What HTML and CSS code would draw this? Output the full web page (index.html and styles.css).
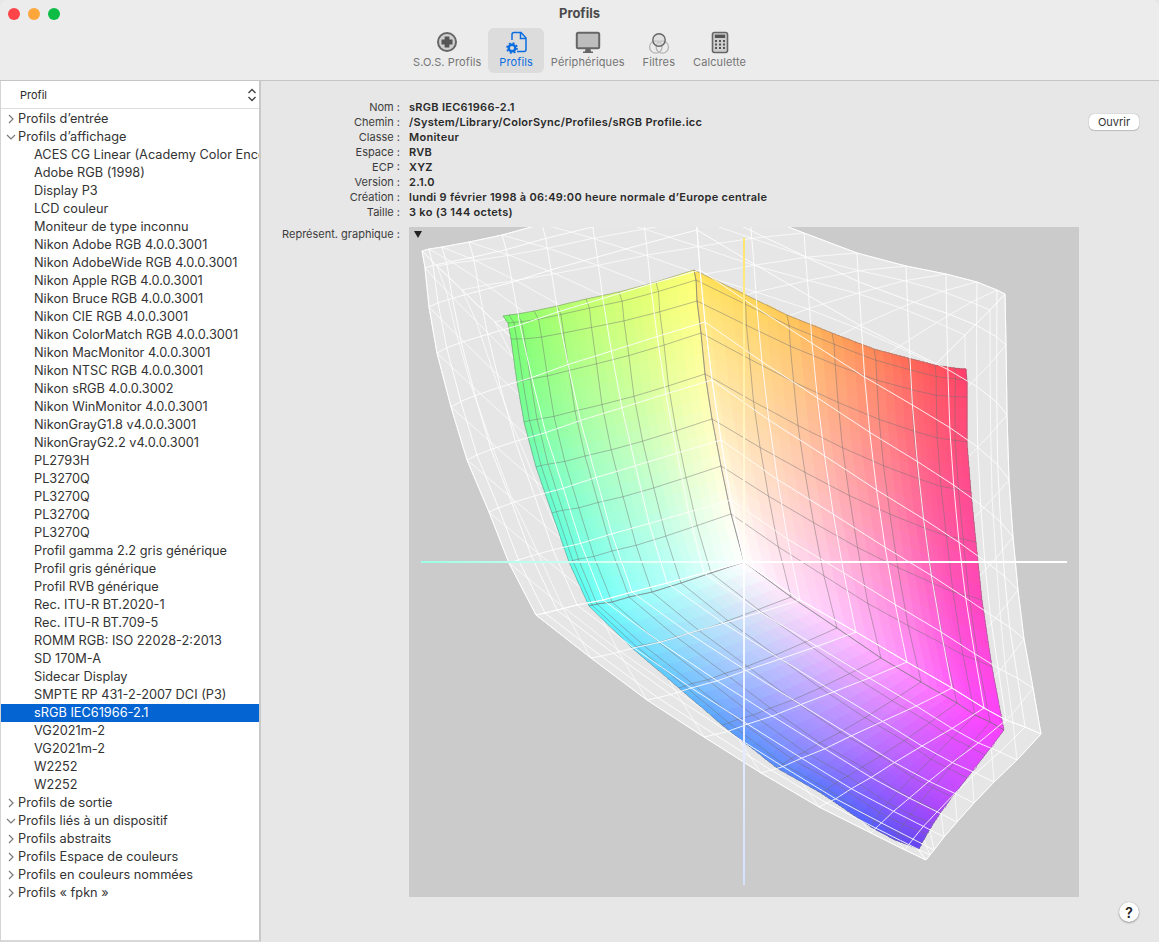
FILE: index.html
```html
<!DOCTYPE html>
<html lang="fr">
<head>
<meta charset="utf-8">
<title>Profils</title>
<link rel="stylesheet" href="styles.css">
</head>
<body>
<div class="window">
  <header class="toolbar">
    <div class="traffic">
      <span class="light light-red"></span>
      <span class="light light-orange"></span>
      <span class="light light-green"></span>
    </div>
    <div class="title">Profils</div>
    <nav class="tabs">
      <div class="tab">
        <svg class="tab-icon" viewBox="0 0 24 24"><circle cx="12" cy="11" r="9" fill="#cfcfcf" stroke="#666" stroke-width="2"/><path d="M9.6 5.5h4.8v3.1h3.1v4.8h-3.1v3.1H9.6v-3.1H6.500v-4.800h3.100z" fill="#555"/></svg>
        <span>S.O.S. Profils</span>
      </div>
      <div class="tab tab-active">
        <svg class="tab-icon" viewBox="0 0 24 24"><path d="M8 9V3.500a2 2 0 0 1 2-2h7l5 5.500v11.500a2 2 0 0 1-2 2h-7" fill="none" stroke="#0a6ce0" stroke-width="1.500"/><path d="M16.500 1.500V7.500H22" fill="none" stroke="#0a6ce0" stroke-width="1.500"/><circle cx="8" cy="17" r="3.300" fill="none" stroke="#0a6ce0" stroke-width="2.400"/><circle cx="8" cy="17" r="5" fill="none" stroke="#0a6ce0" stroke-width="1.600" stroke-dasharray="2 1.930"/></svg>
        <span>Profils</span>
      </div>
      <div class="tab">
        <svg class="tab-icon tab-icon-wide" viewBox="0 0 26 24"><rect x="1.800" y="1.800" width="22.400" height="15.400" rx="1.500" fill="#bdbdbd" stroke="#666" stroke-width="2"/><path d="M10.500 18h5l.5 2.500h2v1.500H8v-1.500h2z" fill="#666"/></svg>
        <span>Périphériques</span>
      </div>
      <div class="tab">
        <svg class="tab-icon" viewBox="0 0 24 24"><circle cx="8.800" cy="16" r="6.200" fill="none" stroke="#b4b4b4" stroke-width="1.300"/><circle cx="15.300" cy="16" r="6.200" fill="none" stroke="#b4b4b4" stroke-width="1.300"/><circle cx="12" cy="9" r="6.200" fill="#d4d4d4" fill-opacity=".5" stroke="#666" stroke-width="1.400"/></svg>
        <span>Filtres</span>
      </div>
      <div class="tab">
        <svg class="tab-icon" viewBox="0 0 24 24"><rect x="4.500" y="1.500" width="15" height="20" rx="2" fill="#cfcfcf" stroke="#666" stroke-width="1.600"/><rect x="6.800" y="3.600" width="10.400" height="3.400" fill="#555"/><g fill="#555"><rect x="7" y="9" width="2" height="2"/><rect x="11" y="9" width="2" height="2"/><rect x="15" y="9" width="2" height="2"/><rect x="7" y="12.500" width="2" height="2"/><rect x="11" y="12.500" width="2" height="2"/><rect x="15" y="12.500" width="2" height="2"/><rect x="7" y="16" width="2" height="2"/><rect x="11" y="16" width="2" height="2"/><rect x="15" y="16" width="2" height="2"/></g></svg>
        <span>Calculette</span>
      </div>
    </nav>
  </header>
  <div class="body">
    <aside class="sidebar">
      <div class="side-head">
        <span>Profil</span>
        <svg class="sort" viewBox="0 0 10 14"><path d="M1.500 5 5 1.500 8.500 5M1.500 9 5 12.500 8.500 9" fill="none" stroke="#444" stroke-width="1.400"/></svg>
      </div>
      <ul class="tree">
        <li class="group"><svg class="chev" viewBox="0 0 10 10"><path d="M3 1l4 4-4 4" /></svg>Profils d’entrée</li>
        <li class="group"><svg class="chev" viewBox="0 0 10 10"><path d="M1 3l4 4 4-4" /></svg>Profils d’affichage</li>
        <li class="item">ACES CG Linear (Academy Color Enco</li>
        <li class="item">Adobe RGB (1998)</li>
        <li class="item">Display P3</li>
        <li class="item">LCD couleur</li>
        <li class="item">Moniteur de type inconnu</li>
        <li class="item">Nikon Adobe RGB 4.0.0.3001</li>
        <li class="item">Nikon AdobeWide RGB 4.0.0.3001</li>
        <li class="item">Nikon Apple RGB 4.0.0.3001</li>
        <li class="item">Nikon Bruce RGB 4.0.0.3001</li>
        <li class="item">Nikon CIE RGB 4.0.0.3001</li>
        <li class="item">Nikon ColorMatch RGB 4.0.0.3001</li>
        <li class="item">Nikon MacMonitor 4.0.0.3001</li>
        <li class="item">Nikon NTSC RGB 4.0.0.3001</li>
        <li class="item">Nikon sRGB 4.0.0.3002</li>
        <li class="item">Nikon WinMonitor 4.0.0.3001</li>
        <li class="item">NikonGrayG1.8 v4.0.0.3001</li>
        <li class="item">NikonGrayG2.2 v4.0.0.3001</li>
        <li class="item">PL2793H</li>
        <li class="item">PL3270Q</li>
        <li class="item">PL3270Q</li>
        <li class="item">PL3270Q</li>
        <li class="item">PL3270Q</li>
        <li class="item">Profil gamma 2.2 gris générique</li>
        <li class="item">Profil gris générique</li>
        <li class="item">Profil RVB générique</li>
        <li class="item">Rec. ITU-R BT.2020-1</li>
        <li class="item">Rec. ITU-R BT.709-5</li>
        <li class="item">ROMM RGB: ISO 22028-2:2013</li>
        <li class="item">SD 170M-A</li>
        <li class="item">Sidecar Display</li>
        <li class="item">SMPTE RP 431-2-2007 DCI (P3)</li>
        <li class="item item-selected">sRGB IEC61966-2.1</li>
        <li class="item">VG2021m-2</li>
        <li class="item">VG2021m-2</li>
        <li class="item">W2252</li>
        <li class="item">W2252</li>
        <li class="group"><svg class="chev" viewBox="0 0 10 10"><path d="M3 1l4 4-4 4" /></svg>Profils de sortie</li>
        <li class="group"><svg class="chev" viewBox="0 0 10 10"><path d="M1 3l4 4 4-4" /></svg>Profils liés à un dispositif</li>
        <li class="group"><svg class="chev" viewBox="0 0 10 10"><path d="M3 1l4 4-4 4" /></svg>Profils abstraits</li>
        <li class="group"><svg class="chev" viewBox="0 0 10 10"><path d="M3 1l4 4-4 4" /></svg>Profils Espace de couleurs</li>
        <li class="group"><svg class="chev" viewBox="0 0 10 10"><path d="M3 1l4 4-4 4" /></svg>Profils en couleurs nommées</li>
        <li class="group"><svg class="chev" viewBox="0 0 10 10"><path d="M3 1l4 4-4 4" /></svg>Profils « fpkn »</li>
      </ul>
    </aside>
    <main class="main">
      <div class="top">
        <dl class="info">
          <dt>Nom :</dt><dd>sRGB IEC61966-2.1</dd>
          <dt>Chemin :</dt><dd>/System/Library/ColorSync/Profiles/sRGB Profile.icc</dd>
          <dt>Classe :</dt><dd>Moniteur</dd>
          <dt>Espace :</dt><dd>RVB</dd>
          <dt>ECP :</dt><dd>XYZ</dd>
          <dt>Version :</dt><dd>2.1.0</dd>
          <dt>Création :</dt><dd>lundi 9 février 1998 à 06:49:00 heure normale d’Europe centrale</dd>
          <dt>Taille :</dt><dd>3 ko (3 144 octets)</dd>
        </dl>
        <button class="open">Ouvrir</button>
      </div>
      <div class="plot-row">
        <div class="plot-label">Représent. graphique :</div>
        <div class="plot">
          <svg id="gamut" class="gamut" viewBox="409 227 670 670"></svg>
          <span class="plot-menu"></span>
        </div>
      </div>
      <div class="foot"><button class="help">?</button></div>
    </main>
  </div>
</div>
<script src="gamut.js"></script>
</body>
</html>
```
FILE: styles.css
```css
* { box-sizing: border-box; }
html, body { margin: 0; height: 100%; }
body {
  background: #e7e7e7;
  font-family: Inter, "Liberation Sans", sans-serif;
  color: #2a2a2a;
  overflow: hidden;
}
.window { width: 1159px; height: 942px; display: flex; flex-direction: column; }

.toolbar {
  position: relative;
  height: 81px;
  background: #ececec;
  border-bottom: 1px solid #c6c6c6;
  border-radius: 8px 8px 0 0;
  display: flex;
  flex-direction: column;
  align-items: center;
  flex: none;
}
.traffic { position: absolute; left: 8px; top: 8px; display: flex; gap: 8px; }
.light { width: 12px; height: 12px; border-radius: 50%; }
.light-red { background: #fc4549; }
.light-orange { background: #fda63c; }
.light-green { background: #0cbc45; }
.title { font-size: 13px; font-weight: 700; color: #4b4b4b; line-height: 16px; margin-top: 5px; }
.tabs { display: flex; margin-top: 7px; }
.tab {
  height: 45px;
  padding: 0 9px;
  display: flex;
  flex-direction: column;
  align-items: center;
  font-size: 11px;
  letter-spacing: .1px;
  color: #757575;
  white-space: nowrap;
  border-radius: 6px;
}
.tab span { line-height: 13px; margin-top: 1px; }
.tab-active { background: #dcdcdc; color: #0a6ce0; padding: 0 11px; margin: 0 -2px; }
.tab-icon { width: 24px; height: 24px; margin-top: 3px; flex: none; }
.tab-icon-wide { width: 26px; }

.body { flex: 1; display: flex; min-height: 0; }
.sidebar {
  width: 261px;
  flex: none;
  background: #fff;
  border-left: 1px solid #d4d4d4;
  border-right: 2px solid #c9c9c9;
  border-bottom: 2px solid #d8d8d8;
  overflow: hidden;
}
.side-head {
  height: 28px;
  display: flex;
  align-items: center;
  justify-content: space-between;
  padding: 0 2px 0 19px;
  font-size: 11px;
  border-bottom: 1px solid #dedede;
}
.sort { width: 10px; height: 14px; }
.tree { list-style: none; margin: 0; padding: 1px 0 0; font-size: 12.750px; }
.tree li { height: 18px; line-height: 18px; white-space: nowrap; overflow: hidden; color: #333; }
.group { padding-left: 17px; position: relative; }
.item { padding-left: 33px; }
.tree .item-selected { background: #0464d2; color: #fff; }
.chev { position: absolute; left: 5px; top: 4px; width: 10px; height: 10px; fill: none; stroke: #7a7a7a; stroke-width: 1.200; }

.main { flex: 1; min-width: 0; display: flex; flex-direction: column; }
.top { display: flex; justify-content: space-between; align-items: flex-start; padding: 19px 20px 0 0; }
.info {
  margin: 0;
  display: grid;
  grid-template-columns: 139px auto;
  column-gap: 9px;
  font-size: 11px;
  line-height: 15px;
}
.info dt { text-align: right; color: #3c3c3c; white-space: nowrap; }
.info dd { margin: 0; font-weight: 600; letter-spacing: .28px; color: #2a2a2a; white-space: nowrap; }
.open {
  margin-top: 14px;
  width: 50px;
  height: 16px;
  padding: 0;
  border: 0;
  border-radius: 5px;
  background: #fff;
  box-shadow: 0 0 1px rgba(0,0,0,.45), 0 1px 1px rgba(0,0,0,.15);
  font: 11px/16px Inter, "Liberation Sans", sans-serif;
  color: #333;
}
.plot-row { display: flex; margin-top: 7px; gap: 9px; align-items: flex-start; }
.plot-label { width: 139px; text-align: right; font-size: 11px; line-height: 15px; color: #3c3c3c; white-space: nowrap; }
.plot { position: relative; width: 670px; height: 670px; background: #cbcbcb; overflow: hidden; }
.gamut { display: block; width: 670px; height: 670px; }
.plot-menu {
  position: absolute;
  left: 5px;
  top: 4px;
  width: 0;
  height: 0;
  border-left: 4.500px solid transparent;
  border-right: 4.500px solid transparent;
  border-top: 7px solid #222;
}
.foot { display: flex; justify-content: flex-end; padding: 5px 20px 0 0; }
.help {
  width: 20px;
  height: 20px;
  padding: 0;
  border: 0;
  border-radius: 50%;
  background: #fff;
  box-shadow: 0 0 1px rgba(0,0,0,.35), 0 1px 2px rgba(0,0,0,.3);
  font: 600 14px Inter, "Liberation Sans", sans-serif;
  color: #222;
}
```
FILE: gamut.js
```js
(function () {
  var NS = 'http://www.w3.org/2000/svg';
  var svg = document.getElementById('gamut');
  var SUB = 4;

  function rev(a) { return a.slice().reverse(); }
  function at(edge, t) {
    var i = Math.min(Math.floor(t), edge.length - 2), f = t - i;
    return edge[i].map(function (c, k) { return c + (edge[i + 1][k] - c) * f; });
  }
  function coons(p, u, v) {
    var a = u / 8, b = v / 8, T = at(p.top, u), B = at(p.bottom, u), L = at(p.left, v), R = at(p.right, v);
    var c00 = p.top[0], c10 = p.top[8], c01 = p.bottom[0], c11 = p.bottom[8];
    return T.map(function (_, k) {
      return (1 - b) * T[k] + b * B[k] + (1 - a) * L[k] + a * R[k]
        - ((1 - a) * (1 - b) * c00[k] + a * (1 - b) * c10[k] + (1 - a) * b * c01[k] + a * b * c11[k]);
    });
  }
  function add(tag, attrs, parent) {
    var n = document.createElementNS(NS, tag);
    for (var k in attrs) n.setAttribute(k, attrs[k]);
    (parent || svg).appendChild(n);
    return n;
  }
  function pts(list) { return list.map(function (p) { return p[0].toFixed(1) + ',' + p[1].toFixed(1); }).join(' '); }
  function lines(p, g) {
    var i, j, line;
    for (i = 0; i <= 8; i++) {
      line = [];
      for (j = 0; j <= 32; j++) line.push(coons(p, i, j / 4));
      add('polyline', { points: pts(line) }, g);
      line = [];
      for (j = 0; j <= 32; j++) line.push(coons(p, j / 4, i));
      add('polyline', { points: pts(line) }, g);
    }
  }

  /* outer gamut (wireframe) */
  var oYG = [[693,190],[641,201],[590,213],[542,224],[502,235],[469,242],[442,247],[429,249],[422,251]];
  var oGC = [[422,251],[425,268],[429,307],[437,353],[451,407],[467,460],[489,512],[509,563],[536,615]];
  var oYW = [[693,190],[694,203],[697,230],[700,270],[705,322],[712,380],[721,440],[731,500],[744,562]];
  var oYR = [[693,190],[750,212],[804,233],[857,253],[906,266],[946,274],[977,282],[997,290],[1005,294]];
  var oRM = [[1005,294],[1006,345],[1007,415],[1009,480],[1013,537],[1018,590],[1024,639],[1033,688],[1041,734]];
  var oWM = [[744,562],[800,600],[856,632],[907,662],[952,688],[984,708],[1006,720],[1025,727],[1041,734]];
  var oWC = [[744,562],[704,573],[667,583],[632,592],[603,600],[577,605],[557,610],[545,613],[536,615]];
  var oCB = [[536,615],[591,658],[647,700],[704,737],[761,773],[819,807],[871,833],[905,850],[926,860]];
  var oMB = [[1041,734],[1017,760],[994,782],[974,803],[957,822],[944,837],[934,850],[930,855],[926,860]];
  var oGK = [[422,251],[437,266],[462,290],[495,322],[535,360],[580,405],[630,455],[685,507],[744,562]];
  var oRK = [[1005,294],[990,310],[965,335],[935,365],[900,400],[865,440],[825,480],[785,520],[744,562]];
  var oBK = [[926,860],[915,845],[895,815],[870,775],[845,735],[815,690],[790,650],[765,605],[744,562]];

  var hull = [].concat(oYG, oGC, oCB, rev(oMB), rev(oRM), rev(oYR));
  add('polygon', { points: pts(hull), fill: '#e6e6e6' });

  /* inner gamut (sRGB solid) */
  var YG = [[694,270],[656,282],[619,292],[586,299],[557,306],[534,311],[517,314],[509,315],[503,316]];
  var YW = [[694,270],[696,280],[697,301],[701,333],[705,374],[712,419],[721,466],[731,514],[744,562]];
  var GC = [[503,316],[508,323],[511,339],[517,382],[524,422],[536,467],[552,513],[569,562],[589,606]];
  var WC = [[744,562],[711,573],[681,583],[652,592],[629,597],[612,602],[597,604],[592,605],[589,606]];
  var YR = [[694,270],[744,294],[787,315],[832,333],[874,349],[908,358],[935,365],[955,368],[966,369]];
  var RM = [[966,369],[967,380],[967,397],[967,442],[971,492],[976,542],[982,600],[992,667],[1004,730]];
  var WM = [[744,562],[791,597],[837,628],[881,658],[921,682],[957,703],[975,715],[990,722],[1004,730]];
  var CB = [[589,606],[632,648],[679,688],[722,725],[777,768],[821,793],[871,827],[895,840],[919,849]];
  var MB = [[1004,730],[985,755],[967,778],[952,797],[941,812],[933,824],[927,834],[922,843],[919,849]];

  var A = {
    top: YG, bottom: WC, left: YW, right: GC,
    c: {
      top: [[252,255,118],[235,255,115],[215,255,115],[195,255,115],[175,255,112],[155,255,110],[140,255,110],[130,255,110],[125,255,110]],
      bottom: [[255,255,255],[225,255,250],[190,255,250],[165,255,250],[145,255,250],[125,255,250],[110,255,250],[95,255,250],[85,255,250]],
      left: [[252,255,118],[255,255,120],[255,255,130],[255,255,145],[255,255,165],[255,255,190],[255,255,215],[255,255,240],[255,255,255]],
      right: [[125,255,110],[125,255,112],[122,255,118],[120,255,135],[115,255,155],[110,255,190],[100,255,210],[92,255,228],[85,255,250]]
    }
  };
  var B = {
    top: YR, bottom: WM, left: YW, right: RM,
    c: {
      top: [[255,225,85],[255,215,85],[255,200,88],[255,165,85],[255,135,85],[255,105,85],[255,85,90],[255,70,100],[255,60,110]],
      bottom: [[255,255,255],[255,225,250],[255,200,255],[255,165,255],[255,130,255],[255,92,255],[252,75,255],[250,70,255],[250,65,255]],
      left: [[255,225,85],[255,230,100],[255,232,120],[255,235,140],[255,238,165],[255,242,190],[255,248,215],[255,252,240],[255,255,255]],
      right: [[255,60,110],[255,65,112],[255,70,115],[255,75,125],[255,75,145],[255,75,160],[255,70,190],[255,70,225],[250,65,255]]
    }
  };
  var C = {
    top: WM, bottom: CB, left: WC, right: MB,
    c: {
      top: B.c.bottom,
      bottom: [[85,255,250],[95,225,255],[95,190,255],[90,160,255],[90,140,255],[85,120,255],[85,95,250],[95,80,245],[100,70,240]],
      left: A.c.bottom,
      right: [[250,65,255],[230,70,255],[210,75,255],[190,75,255],[170,70,250],[150,70,250],[130,70,245],[110,70,240],[100,70,240]]
    }
  };

  function group(stroke) { return add('g', { fill: 'none', stroke: stroke, 'stroke-width': '1' }); }

  /* wire faces that lie behind the solid */
  var back = group('rgba(255,255,255,.7)');
  [
    { top: oYR, bottom: oGK, left: oYG, right: oRK },
    { top: oRM, bottom: rev(oBK), left: oRK, right: oMB },
    { top: oGC, bottom: rev(oBK), left: oGK, right: oCB }
  ].forEach(function (f) { lines(f, back); });

  var cells = add('g', { 'shape-rendering': 'crispEdges' });
  [A, B, C].forEach(function (f) {
    var n = 8 * SUB;
    for (var i = 0; i < n; i++) {
      for (var j = 0; j < n; j++) {
        var u0 = i / SUB, u1 = (i + 1) / SUB, v0 = j / SUB, v1 = (j + 1) / SUB;
        var col = coons(f.c, (u0 + u1) / 2, (v0 + v1) / 2).map(function (x) {
          return Math.round(Math.max(0, Math.min(255, x)));
        });
        var rgb = 'rgb(' + col.join(',') + ')';
        add('polygon', {
          points: pts([coons(f, u0, v0), coons(f, u1, v0), coons(f, u1, v1), coons(f, u0, v1)]),
          fill: rgb, stroke: rgb, 'stroke-width': '.6'
        }, cells);
      }
    }
  });

  var gray = group('rgba(110,110,110,.45)');
  [A, B, C].forEach(function (f) { lines(f, gray); });

  var white = group('rgba(255,255,255,.88)');
  [
    { top: oYG, bottom: oWC, left: oYW, right: oGC },
    { top: oYR, bottom: oWM, left: oYW, right: oRM },
    { top: oWM, bottom: oCB, left: oWC, right: oMB }
  ].forEach(function (f) { lines(f, white); });

  /* a/b axes */
  var defs = add('defs', {});
  function grad(id, x1, y1, x2, y2, stops) {
    var g = add('linearGradient', { id: id, gradientUnits: 'userSpaceOnUse', x1: x1, y1: y1, x2: x2, y2: y2 }, defs);
    stops.forEach(function (s) { add('stop', { offset: s[0], 'stop-color': s[1] }, g); });
  }
  grad('axis-a', 421, 562, 1067, 562, [[0, '#9dffe6'], [0.5, '#ffffff'], [1, '#ffffff']]);
  grad('axis-b', 744, 238, 744, 885, [[0, '#ffe66a'], [0.5, '#ffffff'], [0.75, '#e6eeff'], [1, '#d4e2ff']]);
  add('rect', { x: 421, y: 561, width: 646, height: 2, fill: 'url(#axis-a)' });
  add('rect', { x: 743, y: 238, width: 2, height: 647, fill: 'url(#axis-b)' });
})();
```
